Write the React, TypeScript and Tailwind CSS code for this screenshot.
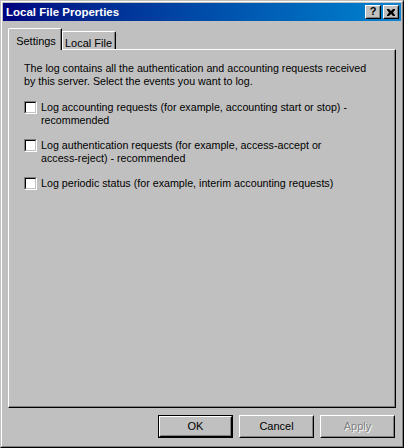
import React from 'react';

const font = { fontFamily: '"Liberation Sans", Arial, sans-serif' };

function Checkbox() {
  return (
    <div className="w-[13px] h-[13px] shrink-0 border border-t-[#808080] border-l-[#808080] border-b-white border-r-white">
      <div className="w-full h-full bg-white border border-t-black border-l-black border-b-[#c0c0c0] border-r-[#c0c0c0]" />
    </div>
  );
}

function CheckRow({ children }: { children: React.ReactNode }) {
  return (
    <label className="flex items-start gap-[4px]">
      <Checkbox />
      <span className="leading-[13px]">{children}</span>
    </label>
  );
}

function Button({ label, isDefault, disabled }: { label: string; isDefault?: boolean; disabled?: boolean }) {
  const inner = (
    <div className="w-full h-full border border-t-white border-l-white border-b-black border-r-black">
      <div className="w-full h-full flex items-center justify-center border border-t-[#c0c0c0] border-l-[#c0c0c0] border-b-[#808080] border-r-[#808080]">
        <span
          className={disabled ? 'text-[#808080] [text-shadow:1px_1px_0_#fff]' : 'text-black'}
        >
          {label}
        </span>
      </div>
    </div>
  );
  return (
    <button
      className={`w-[75px] h-[23px] p-0 bg-[#c0c0c0] text-[11px] ${isDefault ? 'border border-black' : ''}`}
      disabled={disabled}
    >
      {inner}
    </button>
  );
}

function TitleButton({ children }: { children: React.ReactNode }) {
  return (
    <div className="w-[16px] h-[14px] bg-[#c0c0c0] border border-t-white border-l-white border-b-black border-r-black">
      <div className="w-full h-full flex items-center justify-center border border-t-[#c0c0c0] border-l-[#c0c0c0] border-b-[#808080] border-r-[#808080]">
        {children}
      </div>
    </div>
  );
}

export default function App() {
  return (
    <div
      className="w-[404px] h-[448px] bg-[#c0c0c0] border border-t-[#c0c0c0] border-l-[#c0c0c0] border-b-black border-r-black text-[11px] text-black"
      style={font}
    >
      <div className="w-full h-full border border-t-white border-l-white border-b-[#808080] border-r-[#808080] p-px flex flex-col">
        {/* Title bar */}
        <div className="h-[18px] shrink-0 bg-linear-to-r from-[#000080] to-[#1084d0] flex items-center justify-between pl-[3px] pr-[2px]">
          <span className="text-white font-bold text-[11.5px] leading-[18px]">Local File Properties</span>
          <div className="flex gap-[2px]">
            <TitleButton>
              <span className="font-bold text-[11px] leading-none -mt-px">?</span>
            </TitleButton>
            <TitleButton>
              <svg width="8" height="7" viewBox="0 0 8 7">
                <path d="M0 0h2l2 2 2-2h2v1L6 3.5 8 6v1H6L4 5 2 7H0V6l2-2.5L0 1z" fill="#000" />
              </svg>
            </TitleButton>
          </div>
        </div>

        {/* Tabs */}
        <div className="mt-[7px] mx-[5px] h-[21px] flex items-end">
          <div className="relative z-10 -mb-px h-[22px] w-[54px] bg-[#c0c0c0] border-l border-t border-white rounded-tl-[2px] border-r border-r-black shadow-[inset_-1px_0_#808080] flex justify-center pt-[4px] pl-[2px]">
            Settings
          </div>
          <div className="h-[18px] w-[54px] bg-[#c0c0c0] border-t border-white border-r border-r-black shadow-[inset_-1px_0_#808080,inset_1px_0_#fff] rounded-tr-[2px] flex justify-center pt-[3px]">
            Local File
          </div>
        </div>

        {/* Panel */}
        <div className="mx-[5px] h-[359px] border border-t-white border-l-white border-b-black border-r-black shadow-[inset_-1px_-1px_#808080] pt-[12px] pl-[15px] text-[10.7px]">
          <p className="leading-[13px]">
            The log contains all the authentication and accounting requests received
            <br />
            by this server. Select the events you want to log.
          </p>
          <div className="mt-[13px] flex flex-col gap-[12px]">
            <CheckRow>
              Log accounting requests (for example, accounting start or stop) -
              <br />
              recommended
            </CheckRow>
            <CheckRow>
              Log authentication requests (for example, access-accept or
              <br />
              access-reject) - recommended
            </CheckRow>
            <CheckRow>Log periodic status (for example, interim accounting requests)</CheckRow>
          </div>
        </div>

        {/* Buttons */}
        <div className="mt-[7px] mr-[6px] flex justify-end gap-[6px]">
          <Button label="OK" isDefault />
          <Button label="Cancel" />
          <Button label="Apply" disabled />
        </div>
      </div>
    </div>
  );
}
